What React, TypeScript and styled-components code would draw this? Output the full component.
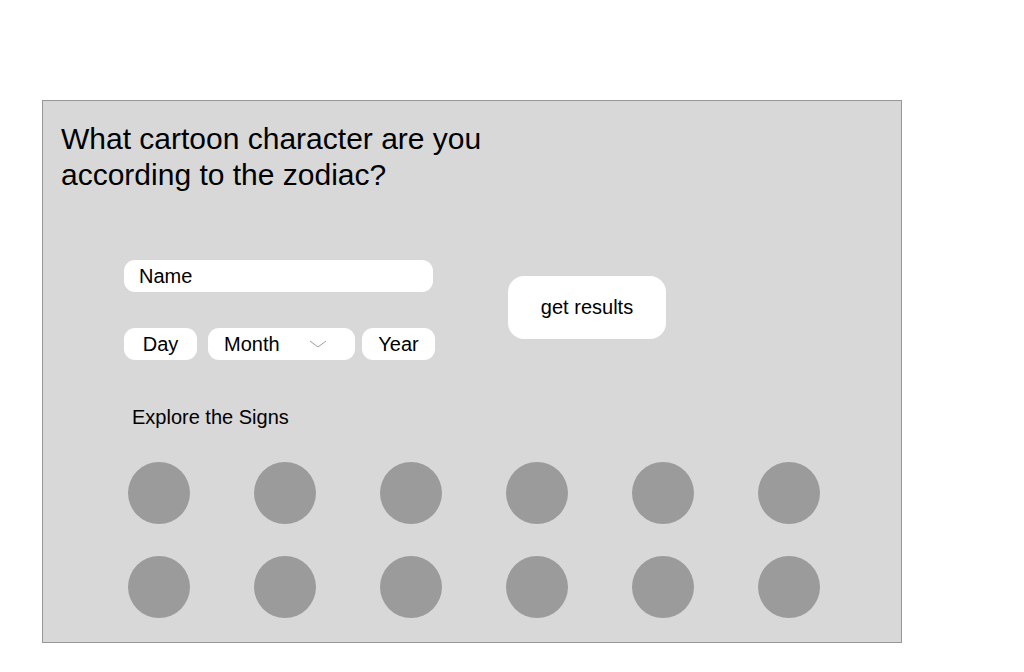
import React from "react";
import styled, { createGlobalStyle } from "styled-components";

const GlobalStyle = createGlobalStyle`
  html, body {
    margin: 0;
    padding: 0;
    background: #ffffff;
  }
  body {
    font-family: "Liberation Sans", Arial, Helvetica, sans-serif;
    color: #000000;
  }
`;

const Page = styled.div`
  width: 1024px;
  height: 672px;
  box-sizing: border-box;
  padding: 100px 0 0 42px;
`;

const Panel = styled.section`
  width: 860px;
  height: 543px;
  box-sizing: border-box;
  background: #d8d8d8;
  border: 1px solid #979797;
  padding: 20px 0 0 18px;
  display: flex;
  flex-direction: column;
`;

const Title = styled.h1`
  margin: 0;
  width: 440px;
  font-size: 30px;
  line-height: 36px;
  font-weight: 400;
`;

const Body = styled.div`
  margin: 67px 0 0 63px;
  display: flex;
  flex-direction: column;
`;

const FormRow = styled.div`
  display: flex;
  align-items: flex-start;
`;

const Fields = styled.div`
  display: flex;
  flex-direction: column;
  gap: 36px;
  width: 311px;
`;

const Pill = styled.div<{ $width: number; $center?: boolean }>`
  width: ${(p) => p.$width}px;
  height: 32px;
  box-sizing: border-box;
  background: #ffffff;
  border-radius: 11px;
  display: flex;
  align-items: center;
  justify-content: ${(p) => (p.$center ? "center" : "space-between")};
  padding: ${(p) => (p.$center ? "0" : "0 28px 0 16px")};
  font-size: 20px;
  line-height: 24px;
`;

const NamePill = styled(Pill)`
  padding-left: 15px;
`;

const DateRow = styled.div`
  display: flex;
  align-items: center;
`;

const Gap = styled.span<{ $w: number }>`
  width: ${(p) => p.$w}px;
  flex: none;
`;

const Chevron = styled.svg`
  width: 18px;
  height: 8px;
  flex: none;
`;

const ResultsButton = styled.button`
  margin: 16px 0 0 73px;
  width: 158px;
  height: 63px;
  border: none;
  border-radius: 16px;
  background: #ffffff;
  font-family: "Liberation Sans", Arial, Helvetica, sans-serif;
  font-size: 20px;
  color: #000000;
  padding: 0;
`;

const SectionLabel = styled.h2`
  margin: 45px 0 0 8px;
  font-size: 20px;
  line-height: 24px;
  font-weight: 400;
`;

const SignGrid = styled.div`
  margin: 33px 0 0 4px;
  display: grid;
  grid-template-columns: repeat(6, 62px);
  column-gap: 64px;
  row-gap: 32px;
`;

const Sign = styled.div`
  width: 62px;
  height: 62px;
  border-radius: 50%;
  background: #9b9b9b;
`;

export default function App() {
  return (
    <>
      <GlobalStyle />
      <Page>
        <Panel>
          <Title>What cartoon character are you according to the zodiac?</Title>
          <Body>
            <FormRow>
              <Fields>
                <NamePill $width={309}>Name</NamePill>
                <DateRow>
                  <Pill $width={73} $center>Day</Pill>
                  <Gap $w={11} />
                  <Pill $width={147}>
                    <span>Month</span>
                    <Chevron viewBox="0 0 18 8">
                      <polyline points="1,1 9,7 17,1" fill="none" stroke="#9b9b9b" strokeWidth="1" />
                    </Chevron>
                  </Pill>
                  <Gap $w={7} />
                  <Pill $width={73} $center>Year</Pill>
                </DateRow>
              </Fields>
              <ResultsButton>get results</ResultsButton>
            </FormRow>
            <SectionLabel>Explore the Signs</SectionLabel>
            <SignGrid>
              {Array.from({ length: 12 }).map((_, i) => (
                <Sign key={i} />
              ))}
            </SignGrid>
          </Body>
        </Panel>
      </Page>
    </>
  );
}
